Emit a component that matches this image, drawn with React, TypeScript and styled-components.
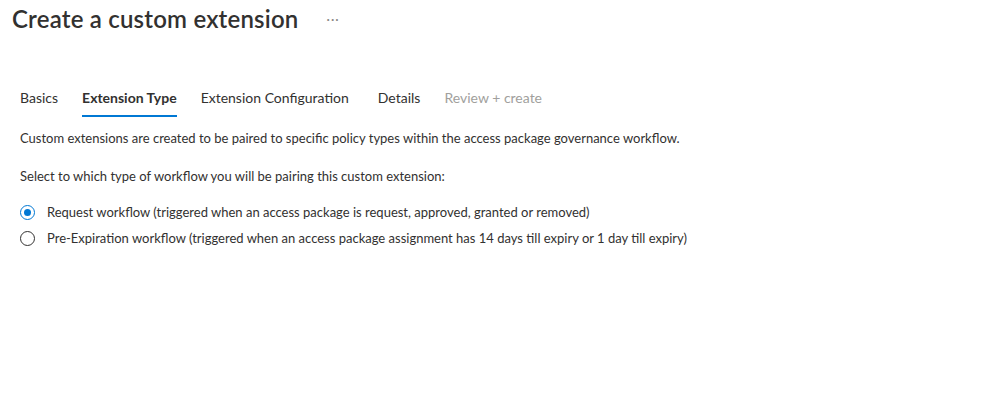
import React, { useState } from "react";
import styled, { createGlobalStyle } from "styled-components";

const Global = createGlobalStyle`
  html, body { margin: 0; padding: 0; background: #ffffff; }
  body { font-family: Lato, "Open Sans", sans-serif; color: #323130; }
`;

const Page = styled.div`
  width: 1002px;
  height: 406px;
  box-sizing: border-box;
  padding: 3px 0 0 12px;
  display: flex;
  flex-direction: column;
`;

const Header = styled.div`
  display: flex;
  align-items: center;
  height: 32px;
`;

const Title = styled.h1`
  margin: 0;
  font-size: 24px;
  font-weight: 600;
  line-height: 32px;
  letter-spacing: 0.2px;
  color: #323130;
`;

const More = styled.button`
  border: none;
  background: none;
  margin-left: 26px;
  padding: 0 2px;
  color: #8a8886;
  font-size: 13px;
  letter-spacing: 1px;
  cursor: pointer;
  font-family: inherit;
`;

const Content = styled.div`
  padding-left: 8px;
  display: flex;
  flex-direction: column;
`;

const Tabs = styled.div`
  display: flex;
  margin-top: 53px;
  gap: 24px;
`;

const Tab = styled.div<{ $active?: boolean; $disabled?: boolean; $wide?: boolean }>`
  font-size: 14px;
  line-height: 20px;
  padding-bottom: 7px;
  margin-left: ${(p) => (p.$wide ? 5 : 0)}px;
  font-weight: ${(p) => (p.$active ? 700 : 400)};
  color: ${(p) => (p.$disabled ? "#a19f9d" : "#323130")};
  border-bottom: 2px solid ${(p) => (p.$active ? "#0078d4" : "transparent")};
`;

const Para = styled.p<{ $top: number }>`
  margin: ${(p) => p.$top}px 0 0;
  font-size: 13px;
  line-height: 18px;
  color: #323130;
`;

const RadioGroup = styled.div`
  display: flex;
  flex-direction: column;
  gap: 8px;
  margin-top: 18px;
`;

const RadioRow = styled.label`
  display: flex;
  align-items: center;
  gap: 12px;
  font-size: 13px;
  line-height: 18px;
  cursor: pointer;
`;

const Circle = styled.span<{ $checked: boolean }>`
  width: 15px;
  height: 15px;
  box-sizing: border-box;
  border-radius: 50%;
  border: 1px solid ${(p) => (p.$checked ? "#0078d4" : "#323130")};
  display: flex;
  align-items: center;
  justify-content: center;
  flex-shrink: 0;
  &::after {
    content: "";
    width: 7px;
    height: 7px;
    border-radius: 50%;
    background: ${(p) => (p.$checked ? "#0078d4" : "transparent")};
  }
`;

const tabs = [
  { label: "Basics" },
  { label: "Extension Type", active: true },
  { label: "Extension Configuration" },
  { label: "Details", wide: true },
  { label: "Review + create", disabled: true },
];

const options = [
  "Request workflow (triggered when an access package is request, approved, granted or removed)",
  "Pre-Expiration workflow (triggered when an access package assignment has 14 days till expiry or 1 day till expiry)",
];

export default function App() {
  const [sel, setSel] = useState(0);
  return (
    <>
      <Global />
      <Page>
        <Header>
          <Title>Create a custom extension</Title>
          <More aria-label="More">···</More>
        </Header>
        <Content>
          <Tabs>
            {tabs.map((t) => (
              <Tab key={t.label} $active={t.active} $disabled={t.disabled} $wide={t.wide}>
                {t.label}
              </Tab>
            ))}
          </Tabs>
          <Para $top={12}>
            Custom extensions are created to be paired to specific policy types within the access package governance workflow.
          </Para>
          <Para $top={20}>Select to which type of workflow you will be pairing this custom extension:</Para>
          <RadioGroup>
            {options.map((o, i) => (
              <RadioRow key={o} onClick={() => setSel(i)}>
                <Circle $checked={sel === i} />
                {o}
              </RadioRow>
            ))}
          </RadioGroup>
        </Content>
      </Page>
    </>
  );
}
